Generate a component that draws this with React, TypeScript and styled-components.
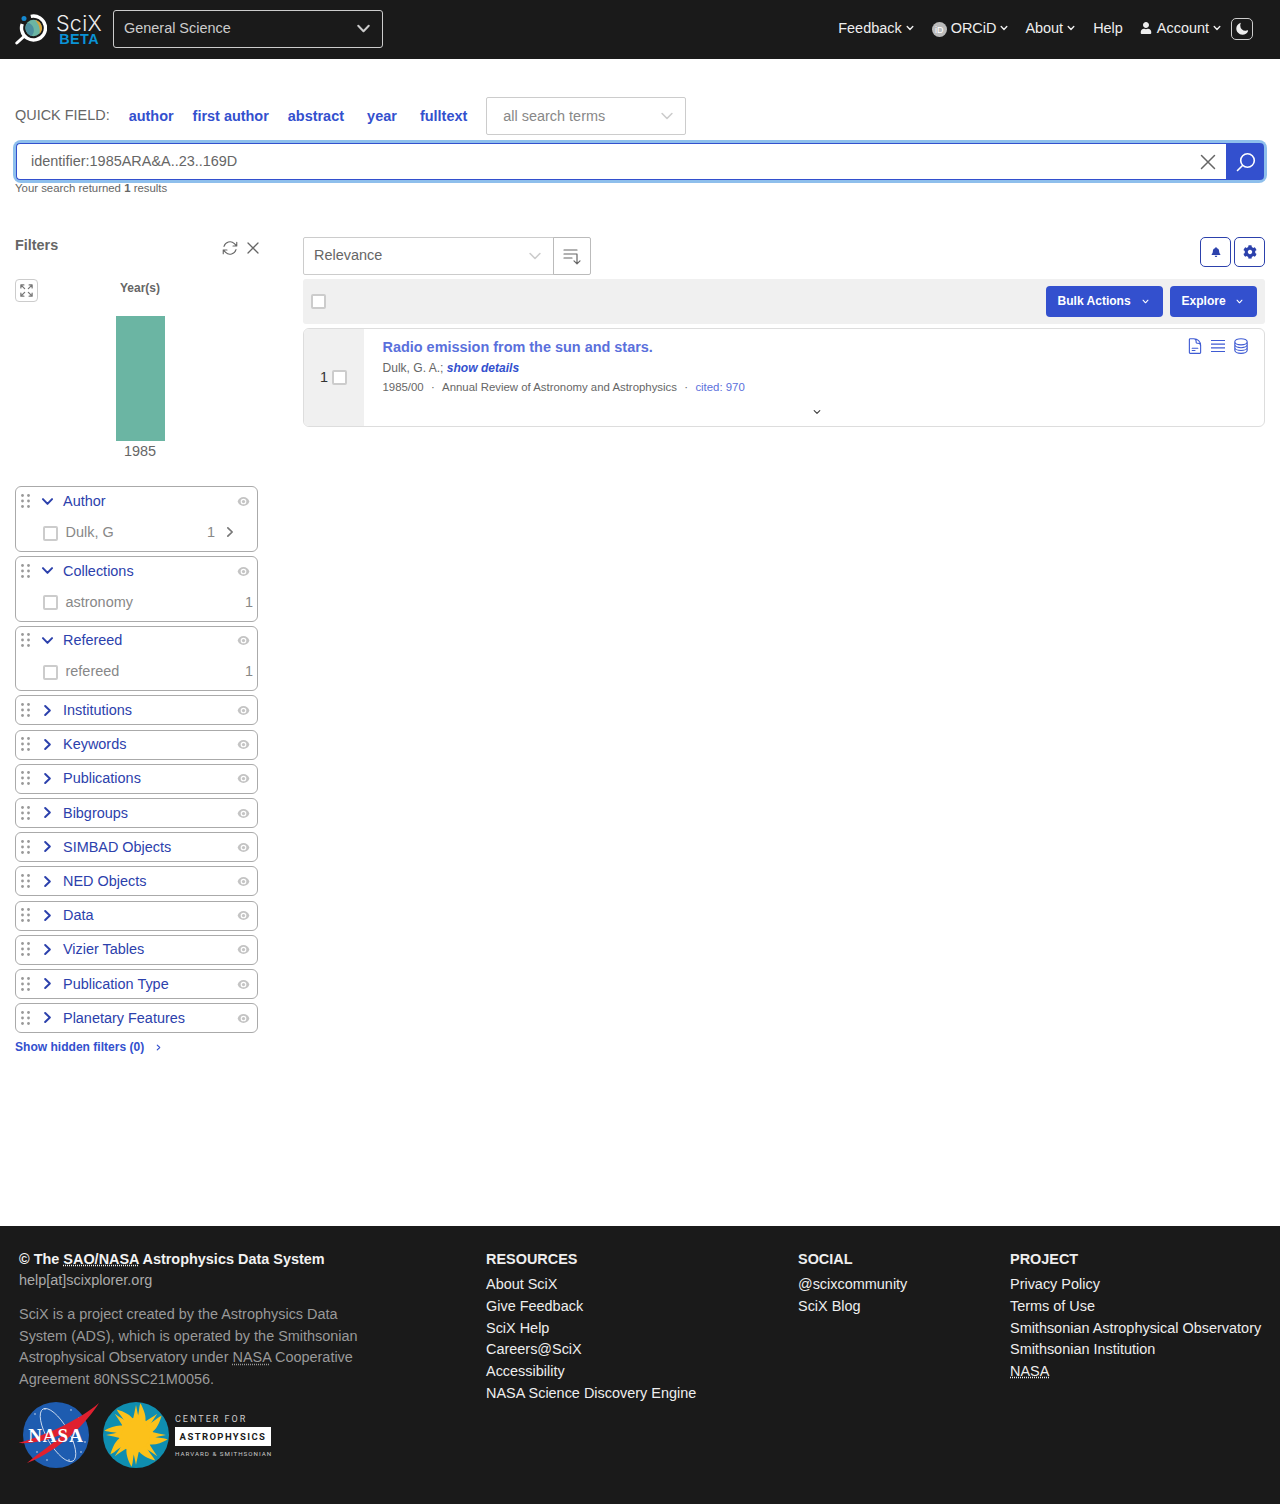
import React from "react";
import styled, { createGlobalStyle } from "styled-components";
import { FaBell, FaCog, FaUser } from "react-icons/fa";
import { HiEye, HiMoon, HiOutlineArrowPath, HiOutlineCircleStack, HiOutlineDocumentText, HiOutlineXMark } from "react-icons/hi2";
import { LuExpand } from "react-icons/lu";

const GlobalStyle = createGlobalStyle`
  * { box-sizing: border-box; }
  body {
    margin: 0;
    background: #fff;
    font-family: "Liberation Sans", Arial, sans-serif;
    font-size: 14.45px;
    color: #666;
  }
`;

const Page = styled.div`
  display: flex;
  flex-direction: column;
  min-height: 1504px;
`;

/* ---------- header ---------- */
const Header = styled.header`
  height: 59px;
  background: #1a1a1a;
  display: flex;
  align-items: center;
  padding: 0 27px 2px 15px;
`;

const Brand = styled.div`
  display: flex;
  align-items: center;
  gap: 8px;
  width: 98px;
`;

const BrandText = styled.div`
  display: flex;
  flex-direction: column;
  align-items: flex-end;
  width: 47px;
  margin-top: 2px;
`;

const BrandName = styled.span`
  color: #eee;
  font-size: 21.5px;
  line-height: 20px;
  font-family: "Inter", "Liberation Sans", sans-serif;
  font-weight: 300;
  letter-spacing: 0.3px;
`;

const BrandBeta = styled.span`
  color: #0a93d6;
  font-weight: 700;
  font-size: 14.4px;
  line-height: 13px;
  letter-spacing: 0.4px;
  margin-right: 3px;
`;

const DisciplineSelect = styled.div`
  width: 270px;
  height: 38px;
  border: 1px solid #ccc;
  border-radius: 3px;
  display: flex;
  align-items: center;
  justify-content: space-between;
  padding: 0 11px 2px 10px;
  color: #ccc;

  svg {
    margin-top: 2px;
  }
`;

const Nav = styled.nav`
  margin-left: auto;
  display: flex;
  align-items: center;
  color: #eee;
`;

const NavItem = styled.div<{ $gap?: number }>`
  display: flex;
  align-items: center;
  gap: 4px;
  margin-top: -2px;
  margin-right: ${(p) => p.$gap ?? 18}px;
`;

const OrcidBadge = styled.span`
  width: 15px;
  height: 15px;
  border-radius: 50%;
  background: #bbb;
  color: #fff;
  font-size: 9px;
  line-height: 16px;
  text-align: center;
  margin-top: 3px;
`;

const ThemeToggle = styled.div`
  width: 22px;
  height: 22px;
  border: 1px solid #ccc;
  border-radius: 5px;
  color: #eee;
  display: flex;
  align-items: center;
  justify-content: center;
  font-size: 14px;
`;

/* ---------- search ---------- */
const SearchArea = styled.section`
  padding: 38px 15px 0;
`;

const QuickRow = styled.div`
  display: flex;
  align-items: center;
  height: 38px;
  gap: 19px;
`;

const QuickLabel = styled.span`
  color: #666;
  margin-top: -2px;
`;

const QuickLink = styled.a`
  color: #3350ce;
  font-weight: 700;
  min-width: 38px;
  text-align: center;
`;

const TermsSelect = styled.div`
  width: 200px;
  height: 38px;
  border: 1px solid #ccc;
  border-radius: 2px;
  display: flex;
  align-items: center;
  justify-content: space-between;
  padding: 0 11px 0 16px;
  color: #888;
`;

const SearchBox = styled.div`
  margin-top: 8px;
  height: 37px;
  display: flex;
  border-radius: 5px;
  box-shadow: 0 0 0 3px #8ebfec;
  margin-left: 1px;
  margin-right: 1px;
`;

const SearchInput = styled.div`
  flex: 1;
  display: flex;
  align-items: center;
  justify-content: space-between;
  border: 1px solid #3350ce;
  border-right: 0;
  border-radius: 4px 0 0 4px;
  padding: 0 10px 2px 14px;
  color: #666;
`;

const SearchIconSlot = styled.span`
  display: flex;
  margin-top: 2px;
`;

const SearchButton = styled.div`
  width: 38px;
  background: #3350ce;
  border-radius: 0 4px 4px 0;
  display: flex;
  align-items: center;
  justify-content: center;
  padding-left: 2px;
`;

const ResultCount = styled.div`
  font-size: 11.4px;
  line-height: 14px;
  margin-top: 1px;
  color: #666;
`;

/* ---------- main ---------- */
const Main = styled.main`
  flex: 1;
  display: grid;
  grid-template-columns: 243px 1fr;
  column-gap: 45px;
  padding: 42px 15px 0;
`;

const FilterHead = styled.div`
  display: flex;
  align-items: center;
  justify-content: space-between;
  height: 22px;
  margin-right: -5px;
`;

const FilterTitle = styled.h2`
  font-size: 14.4px;
  font-weight: 700;
  margin: -6px 0 0;
  color: #666;
`;

const FilterTools = styled.div`
  display: flex;
  align-items: center;
  gap: 4px;
  font-size: 18px;
  color: #666;
`;

const ChartBlock = styled.div`
  position: relative;
  display: flex;
  flex-direction: column;
  align-items: center;
  margin-top: 20px;
  width: 250px;
`;

const ExpandButton = styled.div`
  position: absolute;
  left: 0;
  top: 0;
  width: 23px;
  height: 23px;
  border: 1px solid #ccc;
  border-radius: 4px;
  display: flex;
  align-items: center;
  justify-content: center;
  font-size: 15px;
  color: #777;
`;

const ChartTitle = styled.div`
  font-size: 12px;
  font-weight: 700;
  line-height: 18px;
  color: #666;
`;

const ChartBar = styled.div`
  width: 49px;
  height: 125px;
  margin-top: 19px;
  background: #6bb5a3;
`;

const ChartLabel = styled.div`
  line-height: 20px;
  color: #666;
`;

const FilterList = styled.div`
  display: flex;
  flex-direction: column;
  gap: 4.2px;
  margin-top: 25.35px;
`;

const FilterCard = styled.div<{ $open: boolean }>`
  height: ${(p) => (p.$open ? 65.5 : 30)}px;
  border: 1px solid #aaa;
  border-radius: 6px;
  padding: 0 7px 0 5px;
`;

const CardHead = styled.div`
  height: 27.4px;
  display: flex;
  align-items: center;
  color: #2c41ac;
`;

const CardName = styled.span`
  margin-left: 9px;
  flex: 1;
`;

const EyeIcon = styled(HiEye)`
  color: #c4c4c4;
  font-size: 13px;
  margin-top: 1px;
`;

const FilterRow = styled.div`
  display: flex;
  align-items: center;
  height: 33px;
  padding: 1.6px 0 0 21.5px;
  margin-right: -3px;
  color: #888;
`;

const RowLabel = styled.span`
  margin-left: 8px;
  flex: 1;
`;

const Check = styled.span`
  display: block;
  width: 15px;
  height: 15px;
  flex-shrink: 0;
  background: #fff;
  border: 2px solid #ccc;
  border-radius: 2px;
`;

const RowCheck = styled(Check)`
  margin-top: 2px;
`;

const HiddenLink = styled.a`
  display: flex;
  align-items: center;
  gap: 11px;
  margin-top: 7px;
  font-size: 12.05px;
  font-weight: 700;
  color: #3350ce;
`;

const Results = styled.div`
  display: flex;
  flex-direction: column;
`;

const SortRow = styled.div`
  display: flex;
  justify-content: space-between;
`;

const SortSelect = styled.div`
  width: 251px;
  height: 38px;
  border: 1px solid #ccc;
  border-radius: 2px 0 0 2px;
  display: flex;
  align-items: center;
  justify-content: space-between;
  padding: 0 11px 2px 10px;
  color: #666;

  svg {
    margin-top: 2px;
  }
`;

const SortDirection = styled.div`
  width: 38px;
  height: 38px;
  margin-left: -1px;
  border: 1px solid #bbb;
  border-radius: 0 2px 2px 0;
  display: flex;
  align-items: center;
  justify-content: center;
`;

const SortGroup = styled.div`
  display: flex;
`;

const IconGroup = styled.div`
  display: flex;
  gap: 3px;
`;

const IconButton = styled.div`
  width: 31px;
  height: 30px;
  border: 1px solid #2c41ac;
  border-radius: 5px;
  display: flex;
  align-items: center;
  justify-content: center;
  color: #2c41ac;
  font-size: 14px;
`;

const Toolbar = styled.div`
  height: 45px;
  margin-top: 4px;
  background: #f0f0f0;
  border-radius: 3px;
  display: flex;
  align-items: center;
  padding: 0 8px;
  gap: 7px;
`;

const ActionButton = styled.div<{ $width: number }>`
  width: ${(p) => p.$width}px;
  height: 31px;
  border-radius: 4px;
  background: #3350ce;
  color: #fff;
  font-size: 12.05px;
  font-weight: 700;
  display: flex;
  align-items: center;
  justify-content: space-between;
  padding: 0 14px 2px 11.5px;

  svg {
    margin-top: 2px;
  }
`;

const ToolbarSpacer = styled.div`
  flex: 1;
`;

const ResultCard = styled.article`
  position: relative;
  height: 99px;
  margin-top: 4px;
  border: 1px solid #ddd;
  border-radius: 6px;
  display: flex;
  overflow: hidden;
`;

const ResultIndex = styled.div`
  width: 60px;
  background: #f0f0f0;
  color: #333;
  display: flex;
  align-items: center;
  justify-content: flex-end;
  gap: 4px;
  padding: 0 17px 2px 0;
`;

const ResultBody = styled.div`
  flex: 1;
  padding: 9px 0 0 18.5px;
`;

const ResultTitle = styled.a`
  display: block;
  color: #5a70dc;
  font-weight: 700;
  line-height: 18px;
`;

const ResultAuthors = styled.div`
  margin-top: 3px;
  font-size: 12.05px;
  line-height: 18px;
  color: #666;

  em {
    font-weight: 700;
    color: #3350ce;
  }
`;

const ResultMeta = styled.div`
  display: flex;
  gap: 7.3px;
  margin-top: 1px;
  font-size: 11.4px;
  line-height: 18px;
  color: #666;
`;

const Cited = styled.span`
  color: #5a70dc;
`;

const ResultExpand = styled.div`
  display: flex;
  justify-content: center;
  margin: 12px 0 0 -12px;
`;

const ResultIcons = styled.div`
  position: absolute;
  top: 8px;
  right: 14px;
  display: flex;
  gap: 5px;
  color: #3f5bd3;
  font-size: 18px;
`;

/* ---------- footer ---------- */
const Footer = styled.footer`
  height: 278px;
  background: #1a1a1a;
  display: grid;
  grid-template-columns: 467px 312px 212px 1fr;
  padding: 23px 0 0 19px;
  line-height: 21.7px;
  color: #eee;
`;

const FooterStrong = styled.div`
  font-weight: 700;
  color: #f2f2f2;

  abbr {
    text-decoration: underline dotted;
  }
`;

const FooterMail = styled.div`
  color: #aaa;
  margin-top: -1px;
`;

const FooterBlurb = styled.p`
  width: 345px;
  margin: 12.7px 0 0;
  color: #999;
  line-height: 21.6px;

  abbr {
    text-decoration: underline dotted;
  }
`;

const LogoRow = styled.div`
  display: flex;
  align-items: center;
  margin-top: 9.3px;
`;

const CfaLogo = styled.div`
  display: flex;
  flex-direction: column;
  margin: 3px 0 0 6px;
  color: #ccc;
`;

const CfaSmall = styled.span<{ $size: number; $spacing: number }>`
  font-family: "Roboto", "Liberation Sans", sans-serif;
  font-size: ${(p) => p.$size}px;
  letter-spacing: ${(p) => p.$spacing}px;
  line-height: 10px;
  white-space: nowrap;
`;

const CfaBox = styled.span`
  display: block;
  margin: 3px 0;
  width: 96px;
  height: 19px;
  background: #fff;
  color: #1a1a1a;
  font-family: "Roboto", "Liberation Sans", sans-serif;
  font-size: 9.5px;
  font-weight: 700;
  letter-spacing: 1.4px;
  line-height: 19px;
  text-align: center;
`;

const FooterColumn = styled.div`
  display: flex;
  flex-direction: column;
  align-items: flex-start;
`;

const FooterHeading = styled.div`
  font-weight: 700;
  color: #eee;
  margin-bottom: 3.5px;
`;

const FooterLink = styled.a`
  color: #eee;
  white-space: nowrap;

  abbr {
    text-decoration: underline dotted;
  }
`;

/* ---------- drawings ---------- */
const Chevron = ({ size = 8, color = "currentColor", width = 1.4, dir = "down" }: { size?: number; color?: string; width?: number; dir?: "down" | "right" }) => (
  <svg width={size} height={size} viewBox="0 0 10 10" fill="none" stroke={color} strokeWidth={(width * 10) / size} strokeLinecap="round" strokeLinejoin="round">
    <path d={dir === "down" ? "M1.5 3.2 5 6.8 8.5 3.2" : "M3.2 1.5 6.8 5 3.2 8.5"} />
  </svg>
);

const DragDots = () => (
  <svg width="9" height="14" viewBox="0 0 9 14" fill="#999">
    {[1.5, 7, 12.5].map((y) => (
      <React.Fragment key={y}>
        <circle cx="1.5" cy={y} r="1.4" />
        <circle cx="7.5" cy={y} r="1.4" />
      </React.Fragment>
    ))}
  </svg>
);

const ScixMark = () => (
  <svg width="32" height="32" viewBox="0 0 32 32" fill="none">
    <circle cx="18.5" cy="15" r="12" stroke="#fff" strokeWidth="3.4" strokeDasharray="63 12.4" transform="rotate(-103 18.5 15)" />
    <circle cx="18.5" cy="15" r="8.2" fill="#6bb5a3" />
    <path d="M20 7a8.2 8.2 0 0 1 4.5 14c1-5-.5-10-4.5-14z" fill="#d6a23a" />
    <path d="M12.5 10c3 0 5 2 6 5s0 6-2 8c-3-1-6-4-6-8 0-2 1-4 2-5z" fill="#4d8e9e" />
    <circle cx="9" cy="5.5" r="2.5" fill="#1488d0" />
    <path d="M9.5 23 1.8 30" stroke="#fff" strokeWidth="3" strokeLinecap="round" />
  </svg>
);

const MagnifierIcon = () => (
  <svg width="20" height="20" viewBox="0 0 20 20" fill="none" stroke="#fff" strokeWidth="1.6" strokeLinecap="round">
    <circle cx="11.5" cy="8.5" r="6.8" />
    <path d="M6.5 13.5 1.5 18.5" />
  </svg>
);

const CloseIcon = () => (
  <svg width="16" height="16" viewBox="0 0 16 16" fill="none" stroke="#666" strokeWidth="1.5" strokeLinecap="round">
    <path d="M1.5 1.5 14.5 14.5M14.5 1.5 1.5 14.5" />
  </svg>
);

const SortIcon = () => (
  <svg width="18" height="18" viewBox="0 0 18 18" fill="none" stroke="#666" strokeWidth="1.2" strokeLinecap="round" strokeLinejoin="round">
    <path d="M1 3h13M1 7h13M1 11h8M14 7.5V16.5M11 13.8l3 3 3-3" />
  </svg>
);

const LinesIcon = () => (
  <svg width="18" height="18" viewBox="0 0 18 18" fill="none" stroke="currentColor" strokeWidth="1.2">
    <path d="M2 3.5h14M2 7.2h14M2 10.9h14M2 14.5h14" />
  </svg>
);

const NasaLogo = () => (
  <svg width="84" height="70" viewBox="0 0 84 70">
    <circle cx="37" cy="35" r="33" fill="#1e5cb0" />
    <g fill="#fff">
      {[[16, 14], [26, 9], [52, 10], [60, 18], [62, 52], [18, 52], [50, 60], [66, 42], [28, 60]].map(([x, y]) => (
        <circle key={`${x}-${y}`} cx={x} cy={y} r="0.8" opacity="0.8" />
      ))}
    </g>
    <ellipse cx="39" cy="35" rx="11" ry="30" fill="none" stroke="#dfe8f5" strokeWidth="0.8" transform="rotate(-30 39 35)" />
    <path d="M-1 43C28 35 60 20 80 3 68 22 42 50 8 63 24 50 36 42 46 33 30 40 14 44-1 43z" fill="#e0202f" />
    <text x="37" y="42" textAnchor="middle" fill="#fff" fontFamily="'Liberation Serif', serif" fontWeight="700" fontSize="19" letterSpacing="1">NASA</text>
  </svg>
);

const SunLogo = () => {
  const rays = Array.from({ length: 16 }, (_, i) => (i * 360) / 16);
  return (
    <svg width="66" height="66" viewBox="0 0 66 66">
      <circle cx="33" cy="33" r="33" fill="#0f8eb0" />
      <g fill="#fcc11a">
        <circle cx="33" cy="33" r="17" />
        {rays.map((a, i) => (
          <path
            key={a}
            transform={`rotate(${a} 33 33)`}
            d={i % 2 === 0 ? "M29.5 19C31 13 32 8 33 3 34 8 35 13 36.5 19z" : "M27 19C29 13 25 8 25 2 31 7 36 12 37 19z"}
          />
        ))}
      </g>
    </svg>
  );
};

const openFilters = [
  { name: "Author", item: "Dulk, G", arrow: true },
  { name: "Collections", item: "astronomy", arrow: false },
  { name: "Refereed", item: "refereed", arrow: false },
];

const closedFilters = [
  "Institutions",
  "Keywords",
  "Publications",
  "Bibgroups",
  "SIMBAD Objects",
  "NED Objects",
  "Data",
  "Vizier Tables",
  "Publication Type",
  "Planetary Features",
];

const RowCount = styled.span<{ $arrow: boolean }>`
  margin-right: ${(p) => (p.$arrow ? 9 : 0)}px;
`;

const RowArrow = styled.span`
  display: flex;
  width: 12px;
  margin-right: 17px;
`;

const CardToggle = styled.span`
  display: flex;
  margin-left: 11px;
  color: #2c41ac;
`;

export default function App() {
  return (
    <Page>
      <GlobalStyle />
      <Header>
        <Brand>
          <ScixMark />
          <BrandText>
            <BrandName>SciX</BrandName>
            <BrandBeta>BETA</BrandBeta>
          </BrandText>
        </Brand>
        <DisciplineSelect>
          General Science
          <Chevron size={15} width={2} color="#ccc" />
        </DisciplineSelect>
        <Nav>
          <NavItem>Feedback<Chevron /></NavItem>
          <NavItem $gap={17}><OrcidBadge>iD</OrcidBadge>ORCiD<Chevron /></NavItem>
          <NavItem>About<Chevron /></NavItem>
          <NavItem $gap={17}>Help</NavItem>
          <NavItem $gap={10}><FaUser size={12} style={{ marginRight: 1 }} />Account<Chevron /></NavItem>
          <ThemeToggle><HiMoon /></ThemeToggle>
        </Nav>
      </Header>

      <SearchArea>
        <QuickRow>
          <QuickLabel>QUICK FIELD:</QuickLabel>
          <QuickLink>author</QuickLink>
          <QuickLink>first author</QuickLink>
          <QuickLink>abstract</QuickLink>
          <QuickLink>year</QuickLink>
          <QuickLink>fulltext</QuickLink>
          <TermsSelect>
            all search terms
            <Chevron size={14} width={1.6} color="#ccc" />
          </TermsSelect>
        </QuickRow>
        <SearchBox>
          <SearchInput>
            identifier:1985ARA&amp;A..23..169D
            <SearchIconSlot><CloseIcon /></SearchIconSlot>
          </SearchInput>
          <SearchButton><MagnifierIcon /></SearchButton>
        </SearchBox>
        <ResultCount>Your search returned <b>1</b> results</ResultCount>
      </SearchArea>

      <Main>
        <aside>
          <FilterHead>
            <FilterTitle>Filters</FilterTitle>
            <FilterTools>
              <HiOutlineArrowPath />
              <HiOutlineXMark style={{ fontSize: 20 }} />
            </FilterTools>
          </FilterHead>
          <ChartBlock>
            <ExpandButton><LuExpand /></ExpandButton>
            <ChartTitle>Year(s)</ChartTitle>
            <ChartBar />
            <ChartLabel>1985</ChartLabel>
          </ChartBlock>
          <FilterList>
            {openFilters.map((f) => (
              <FilterCard key={f.name} $open>
                <CardHead>
                  <DragDots />
                  <CardToggle><Chevron size={13} width={2} /></CardToggle>
                  <CardName>{f.name}</CardName>
                  <EyeIcon />
                </CardHead>
                <FilterRow>
                  <RowCheck />
                  <RowLabel>{f.item}</RowLabel>
                  <RowCount $arrow={f.arrow}>1</RowCount>
                  {f.arrow && <RowArrow><Chevron size={12} width={1.7} color="#777" dir="right" /></RowArrow>}
                </FilterRow>
              </FilterCard>
            ))}
            {closedFilters.map((name) => (
              <FilterCard key={name} $open={false}>
                <CardHead>
                  <DragDots />
                  <CardToggle><Chevron size={13} width={2} dir="right" /></CardToggle>
                  <CardName>{name}</CardName>
                  <EyeIcon />
                </CardHead>
              </FilterCard>
            ))}
          </FilterList>
          <HiddenLink>
            Show hidden filters (0)
            <Chevron size={7} width={1.1} dir="right" />
          </HiddenLink>
        </aside>

        <Results>
          <SortRow>
            <SortGroup>
              <SortSelect>
                Relevance
                <Chevron size={14} width={1.6} color="#ccc" />
              </SortSelect>
              <SortDirection><SortIcon /></SortDirection>
            </SortGroup>
            <IconGroup>
              <IconButton><FaBell size={10} /></IconButton>
              <IconButton><FaCog /></IconButton>
            </IconGroup>
          </SortRow>
          <Toolbar>
            <Check />
            <ToolbarSpacer />
            <ActionButton $width={117}>Bulk Actions <Chevron size={7} width={1.1} /></ActionButton>
            <ActionButton $width={87}>Explore <Chevron size={7} width={1.1} /></ActionButton>
          </Toolbar>
          <ResultCard>
            <ResultIndex>1 <RowCheck /></ResultIndex>
            <ResultBody>
              <ResultTitle>Radio emission from the sun and stars.</ResultTitle>
              <ResultAuthors>Dulk, G. A.; <em>show details</em></ResultAuthors>
              <ResultMeta>
                <span>1985/00</span>
                <span>·</span>
                <span>Annual Review of Astronomy and Astrophysics</span>
                <span>·</span>
                <Cited>cited: 970</Cited>
              </ResultMeta>
              <ResultExpand><Chevron size={8} width={1.2} color="#444" /></ResultExpand>
            </ResultBody>
            <ResultIcons>
              <HiOutlineDocumentText />
              <LinesIcon />
              <HiOutlineCircleStack />
            </ResultIcons>
          </ResultCard>
        </Results>
      </Main>

      <Footer>
        <div>
          <FooterStrong>© The <abbr>SAO/NASA</abbr> Astrophysics Data System</FooterStrong>
          <FooterMail>help[at]scixplorer.org</FooterMail>
          <FooterBlurb>
            SciX is a project created by the Astrophysics Data System (ADS), which is operated by the Smithsonian Astrophysical Observatory under <abbr>NASA</abbr> Cooperative Agreement 80NSSC21M0056.
          </FooterBlurb>
          <LogoRow>
            <NasaLogo />
            <SunLogo />
            <CfaLogo>
              <CfaSmall $size={9} $spacing={2}>CENTER FOR</CfaSmall>
              <CfaBox>ASTROPHYSICS</CfaBox>
              <CfaSmall $size={6.2} $spacing={1}>HARVARD &amp; SMITHSONIAN</CfaSmall>
            </CfaLogo>
          </LogoRow>
        </div>
        <FooterColumn>
          <FooterHeading>RESOURCES</FooterHeading>
          {["About SciX", "Give Feedback", "SciX Help", "Careers@SciX", "Accessibility", "NASA Science Discovery Engine"].map((l) => (
            <FooterLink key={l}>{l}</FooterLink>
          ))}
        </FooterColumn>
        <FooterColumn>
          <FooterHeading>SOCIAL</FooterHeading>
          <FooterLink>@scixcommunity</FooterLink>
          <FooterLink>SciX Blog</FooterLink>
        </FooterColumn>
        <FooterColumn>
          <FooterHeading>PROJECT</FooterHeading>
          <FooterLink>Privacy Policy</FooterLink>
          <FooterLink>Terms of Use</FooterLink>
          <FooterLink>Smithsonian Astrophysical Observatory</FooterLink>
          <FooterLink>Smithsonian Institution</FooterLink>
          <FooterLink><abbr>NASA</abbr></FooterLink>
        </FooterColumn>
      </Footer>
    </Page>
  );
}
